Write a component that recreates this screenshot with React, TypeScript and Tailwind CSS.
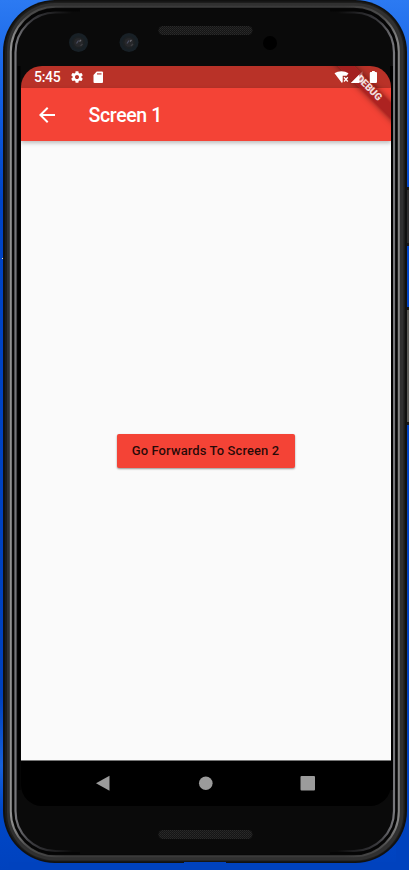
function DeviceShell() {
  return (
    <svg className="absolute inset-0" width="409" height="870" viewBox="0 0 409 870" fill="none" aria-hidden="true">
      <defs>
        <linearGradient id="wall" x1="0" y1="0" x2="0" y2="1">
          <stop offset="0" stopColor="#2c7af2" />
          <stop offset="0.1" stopColor="#1562e4" />
          <stop offset="0.23" stopColor="#0044c6" />
          <stop offset="0.8" stopColor="#0041bd" />
          <stop offset="0.88" stopColor="#1760d8" />
          <stop offset="0.93" stopColor="#0048c8" />
          <stop offset="1" stopColor="#0042be" />
        </linearGradient>
        <linearGradient id="fade" x1="0" y1="0" x2="1" y2="0">
          <stop offset="0" stopColor="#77777b" />
          <stop offset="0.04" stopColor="#3c3c40" />
          <stop offset="0.15" stopColor="#0a0a0a" />
          <stop offset="0.85" stopColor="#0a0a0a" />
          <stop offset="0.96" stopColor="#3c3c40" />
          <stop offset="1" stopColor="#77777b" />
        </linearGradient>
        <linearGradient id="rim" x1="0" y1="0" x2="1" y2="0">
          <stop offset="0" stopColor="#929292" />
          <stop offset="0.04" stopColor="#4c4c4c" />
          <stop offset="0.14" stopColor="#3a3a3a" />
          <stop offset="0.86" stopColor="#3a3a3a" />
          <stop offset="0.96" stopColor="#4c4c4c" />
          <stop offset="1" stopColor="#858585" />
        </linearGradient>
        <pattern id="mesh" width="2" height="2" patternUnits="userSpaceOnUse">
          <rect width="2" height="2" fill="#151515" />
          <rect width="1" height="1" fill="#2a2a2a" />
          <rect x="1" y="1" width="1" height="1" fill="#242424" />
        </pattern>
      </defs>
      <rect width="409" height="870" fill="url(#wall)" />
      <rect x="9" y="862" width="400" height="8" fill="#0042be" />
      <rect x="396" y="700" width="13" height="170" fill="#0042be" />
      <rect x="2" y="258" width="1" height="1" fill="#e0e0d0" />
      <rect x="406" y="187" width="4" height="59" fill="#171717" />
      <rect x="407" y="190" width="2" height="53" fill="#303030" />
      <rect x="406" y="307" width="4" height="118" fill="#171717" />
      <rect x="407" y="310" width="2" height="112" fill="#5c5c58" />
      <rect x="3" y="0" width="404" height="863" rx="52" fill="#111110" />
      <rect x="5" y="1.500" width="400" height="860" rx="50" fill="#1d1d1c" />
      <rect x="7" y="3" width="396.500" height="857.500" rx="48" fill="#303030" />
      <rect x="10.800" y="6.800" width="388" height="849.500" rx="45" fill="#0a0a0a" stroke="url(#rim)" strokeWidth="2" />
      <rect x="12.500" y="8.500" width="384.500" height="846" rx="43" fill="#050505" />
      <rect x="15.500" y="12.500" width="378.500" height="838.500" rx="40" fill="#0a0a0a" stroke="url(#fade)" strokeWidth="2.200" />
      <path d="M80 8.500H330V14H80zM80 849H330v5.500H80z" fill="#0a0a0a" />
      <path d="M19 66V790M391.500 66V790" stroke="#000" strokeWidth="3" />
      <path d="M184 862.500h42" stroke="#0042be" strokeWidth="1" />
      <rect x="158.500" y="26" width="94" height="9" rx="4.500" fill="url(#mesh)" />
      <rect x="158.500" y="830" width="94" height="9" rx="4.500" fill="url(#mesh)" />
      <circle cx="270" cy="43" r="7" fill="#000" />
      {[78.5, 129].map((x) => (
        <g key={x}>
          <circle cx={x} cy="42.500" r="9.500" fill="#182026" />
          <circle cx={x} cy="42.500" r="6.500" fill="#1c2023" />
          <circle cx={x} cy="42.500" r="4.500" fill="#26272a" />
          <path d={`M${x - 2} 43.500l2-3`} stroke="#4a4e62" strokeWidth="1.200" />
          <path d={`M${x + 1} 41.500l1.500-1.500`} stroke="#6a6a70" strokeWidth="1.200" />
          <path d={`M${x + 2} 46l2-2`} stroke="#3c3d40" strokeWidth="1.500" />
        </g>
      ))}
    </svg>
  );
}

function StatusBar() {
  return (
    <div className="flex h-[22px] items-center bg-[#b93228] pl-[13px] text-white">
      <span className="w-[27px] text-[14px] font-medium leading-[22px] tracking-[-0.3px]">5:45</span>
      <svg className="ml-[9px]" width="14" height="14" viewBox="0 0 24 24" fill="currentColor">
        <path d="M19.430 12.980c.04-.32.07-.64.07-.98s-.03-.66-.07-.98l2.110-1.650c.19-.15.24-.42.12-.64l-2-3.460c-.12-.22-.39-.3-.61-.22l-2.490 1c-.52-.4-1.080-.73-1.690-.98l-.38-2.650A.488.488 0 0 0 14 2h-4c-.25 0-.46.18-.49.42l-.38 2.650c-.61.25-1.170.59-1.690.98l-2.490-1c-.23-.09-.49 0-.61.22l-2 3.460c-.13.22-.07.49.12.64l2.110 1.650c-.04.32-.07.65-.07.98s.03.66.07.98l-2.110 1.650c-.19.15-.24.42-.12.64l2 3.460c.12.22.39.3.61.22l2.490-1c.52.4 1.080.73 1.690.98l.38 2.650c.03.24.24.42.49.42h4c.25 0 .46-.18.49-.42l.38-2.650c.61-.25 1.170-.59 1.690-.98l2.490 1c.23.09.49 0 .61-.22l2-3.460c.12-.22.07-.49-.12-.64l-2.110-1.650zM12 15.500c-1.930 0-3.500-1.570-3.500-3.500s1.570-3.500 3.500-3.500 3.500 1.570 3.500 3.500-1.570 3.500-3.500 3.500z" />
      </svg>
      <svg className="ml-[8.500px]" width="11" height="13" viewBox="0 0 11 13">
        <path d="M3.700.5H9a1 1 0 0 1 1 1v9.500a1 1 0 0 1-1 1H1.500a1 1 0 0 1-1-1V3.900z" fill="#fff" />
        <path d="M4 2h4.500v1.700H4z" fill="#cf7b74" />
      </svg>
      <svg className="relative z-30 ml-auto mr-[13px]" width="44" height="14" viewBox="0 0 44 14" fill="#fff">
        <path d="M.5 3.300C4.300.5 10.500.5 14.500 3.300L12.700 5.800H8.700v6.300L7.900 12.900z" />
        <path d="M10 7.300l3.800 4.200M13.800 7.300l-3.800 4.200" stroke="#fff" strokeWidth="1.300" />
        <path d="M16.800 13L28.500 1.300V13z" opacity="0.300" />
        <path d="M16.800 13L25.300 4.500V13z" />
        <path d="M36.700 2h1.300V1h2.800v1h1.300c.5 0 .9.400.9.900v9.200c0 .5-.4.900-.9.900h-5.400c-.5 0-.9-.4-.9-.9V2.900c0-.5.4-.9.900-.9z" />
      </svg>
    </div>
  );
}

function DebugBanner() {
  return (
    <div className="absolute right-0 top-0 z-20 h-[64px] w-[80px] overflow-hidden">
      <div className="absolute left-[3px] top-[16.5px] h-[12px] w-[110px] rotate-45 bg-[#a01d1d]/85 shadow-[0_0_6px_rgba(0,0,0,0.5)]" />
    </div>
  );
}

function DebugLabel() {
  return (
    <span className="absolute right-[-32.5px] top-[15.5px] z-40 w-[110px] rotate-45 text-center text-[10px] font-black leading-[12px] tracking-[-0.2px] text-white/85">
      DEBUG
    </span>
  );
}

function AppBar() {
  return (
    <header className="z-10 flex h-[53px] items-center bg-[#f44336] pl-[18px] text-white shadow-[0_2px_4px_rgba(0,0,0,0.25)]">
      <svg width="16" height="16" viewBox="4 4 16 16" fill="currentColor">
        <path d="M20 11H7.830l5.590-5.590L12 4l-8 8 8 8 1.410-1.410L7.830 13H20v-2z" />
      </svg>
      <h1 className="ml-[33.5px] pt-[2px] text-[19.5px] font-medium leading-6 tracking-[-0.35px]">Screen 1</h1>
    </header>
  );
}

function NavigationBar() {
  return (
    <nav className="flex h-[46px] items-center border-t border-[#777] bg-black pl-[74px]">
      <svg width="222" height="18" viewBox="0 0 222 18" fill="#9b9b9b">
        <path d="M1 8.200L14.500.7v15z" />
        <circle cx="110.800" cy="8.200" r="6.800" />
        <rect x="205.500" y="1" width="14.500" height="14.500" rx="1" />
      </svg>
    </nav>
  );
}

export default function App() {
  return (
    <div className="relative h-[870px] w-[409px] overflow-hidden pl-[21px] pt-[66px] font-['Roboto',sans-serif]">
      <DeviceShell />
      <div className="relative flex h-[740px] w-[370px] flex-col overflow-hidden rounded-[21px]">
        <StatusBar />
        <AppBar />
        <main className="flex flex-1 items-center justify-center bg-[#fafafa] pt-px">
          <button className="h-[34px] w-[178px] rounded-[2px] bg-[#f44336] pr-px text-[13px] font-medium tracking-[0.1px] text-black/85 shadow-[0_1px_2px_rgba(0,0,0,0.4)]">
            Go Forwards To Screen 2
          </button>
        </main>
        <NavigationBar />
        <DebugBanner />
        <DebugLabel />
      </div>
    </div>
  );
}
